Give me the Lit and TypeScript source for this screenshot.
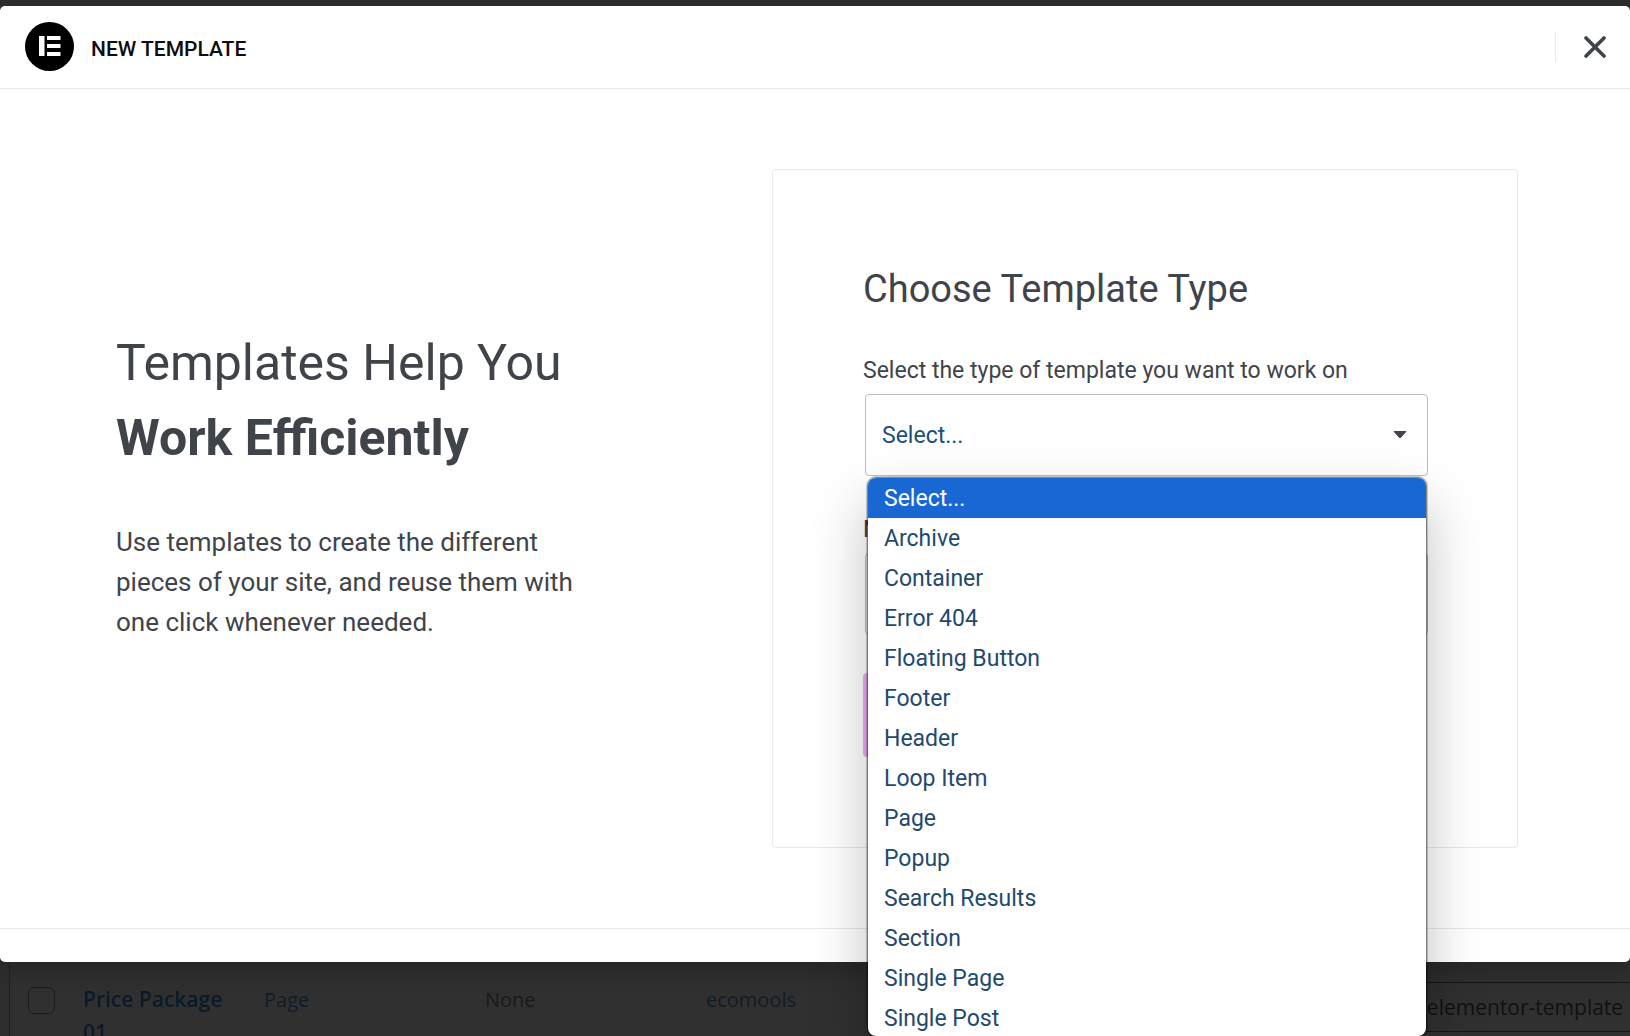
import { LitElement, html, css, svg } from "lit";
import { customElement, state } from "lit/decorators.js";

const TYPES = [
  "Select...",
  "Archive",
  "Container",
  "Error 404",
  "Floating Button",
  "Footer",
  "Header",
  "Loop Item",
  "Page",
  "Popup",
  "Search Results",
  "Section",
  "Single Page",
  "Single Post",
];

const logo = svg`
  <circle cx="24.5" cy="24.5" r="24.5" fill="#000"></circle>
  <path d="M14 14h5.5v20H14zM22 14h13.5v4H22zM22 22h13.5v4H22zM22 30h13.5v4H22z" fill="#fff"></path>`;

/** Drop-down with its own list of template types. */
@customElement("type-select")
class TypeSelect extends LitElement {
  @state() private open = true;
  @state() private value = TYPES[0];

  static styles = css`
    :host {
      display: block;
      position: relative;
    }
    .select {
      display: block;
      box-sizing: border-box;
      width: 100%;
      height: 82px;
      padding: 2px 16px 0;
      border: 1px solid #babfc5;
      border-radius: 4px;
      background: #fff;
      appearance: none;
      outline: none;
      color: #1f4f75;
      font: 400 23px/32px Roboto, sans-serif;
    }
    .arrow {
      position: absolute;
      top: 37px;
      right: 21px;
      pointer-events: none;
    }
    .list {
      position: absolute;
      z-index: 2;
      top: 84px;
      left: 3px;
      right: 2px;
      box-sizing: border-box;
      max-height: 558px;
      margin: 0;
      padding: 0;
      overflow: hidden;
      list-style: none;
      background: #fff;
      border-radius: 8px;
      box-shadow:
        0 0 0 1px rgba(0, 0, 0, 0.3),
        0 0 0 2px rgba(0, 0, 0, 0.2),
        0 26px 56px rgba(0, 0, 0, 0.26);
    }
    .option {
      display: block;
      box-sizing: border-box;
      width: 100%;
      height: 40px;
      padding: 2px 16px 0;
      border: 0;
      background: none;
      text-align: left;
      color: #1f4a6e;
      font: 400 23px/38px Roboto, sans-serif;
    }
    .option.current {
      background: #1967d2;
      color: #fff;
    }
  `;

  private pick(v: string) {
    this.value = v;
    this.open = false;
  }

  private toggle(e: Event) {
    e.preventDefault();
    this.open = !this.open;
  }

  render() {
    return html`
      <select
        class="select"
        aria-label="Select the type of template you want to work on"
        .value=${this.value}
        @mousedown=${this.toggle}
      >
        ${TYPES.map((t) => html`<option ?selected=${t === this.value}>${t}</option>`)}
      </select>
      <svg class="arrow" width="14" height="8" viewBox="0 0 14 8" aria-hidden="true">
        <path d="M1 0.5h12L7 7z" fill="#3f444b" stroke="#3f444b" stroke-linejoin="round"></path>
      </svg>
      ${this.open
        ? html`<ul class="list">
            ${TYPES.map(
              (t) => html`<li>
                <button
                  type="button"
                  class="option ${t === this.value ? "current" : ""}"
                  @click=${() => this.pick(t)}
                >${t}</button>
              </li>`
            )}
          </ul>`
        : null}
    `;
  }
}

@customElement("app-root")
class AppRoot extends LitElement {
  static styles = css`
    :host {
      display: block;
      box-sizing: border-box;
      height: 100vh;
      padding-top: 6px;
      overflow: hidden;
      background: #2e2e2e;
      color: #3f444b;
      font-family: Roboto, sans-serif;
    }
    .modal {
      position: relative;
      z-index: 1;
      border-radius: 5px;
      background: #fff;
      box-shadow: 2px 8px 23px 3px rgba(0, 0, 0, 0.2);
    }
    .header {
      display: flex;
      align-items: center;
      box-sizing: border-box;
      height: 83px;
      padding: 0 24px 1px 25px;
      border-bottom: 1px solid #e6e8ea;
    }
    .title {
      flex: 1;
      margin: 4px 0 0 17px;
      color: #0c0d0e;
      font-size: 21px;
      font-weight: 500;
      line-height: 28px;
    }
    .close {
      display: flex;
      align-items: center;
      height: 30px;
      padding: 0 0 0 28px;
      border: 0;
      border-left: 1px solid #e6e8ea;
      background: none;
    }
    .main {
      display: grid;
      grid-template-columns: 656fr 746fr;
      align-items: center;
      padding: 80px 112px 80px 116px;
    }
    .intro {
      max-width: 500px;
      padding-bottom: 50px;
    }
    .headline {
      margin: 0 0 46px;
      font-size: 50px;
      font-weight: 400;
      line-height: 75px;
    }
    .strong {
      display: block;
      font-weight: 700;
    }
    .text {
      margin: 0;
      font-size: 26px;
      line-height: 40px;
    }
    .card {
      display: flex;
      flex-direction: column;
      padding: 95px 89px 90px 90px;
      border: 1px solid #e6e8ea;
      border-radius: 4px;
    }
    .card-title {
      margin: 0 0 42px;
      font-size: 38px;
      font-weight: 400;
      line-height: 48px;
    }
    .label {
      margin-bottom: 7px;
      font-size: 23px;
      line-height: 32px;
    }
    .field {
      margin: 0 0 38px 2px;
    }
    .input {
      box-sizing: border-box;
      height: 82px;
      padding: 0 16px;
      border: 1px solid #babfc5;
      border-radius: 4px;
      font: 400 23px/32px Roboto, sans-serif;
    }
    .create {
      height: 84px;
      margin-right: 8px;
      border: 0;
      border-radius: 4px;
      background: #f0abfc;
      color: #0c0d0e;
      font: 500 23px/32px Roboto, sans-serif;
    }
    .footer {
      height: 33px;
      border-top: 1px solid #e6e8ea;
    }
    .table {
      width: calc(100% - 9px);
      margin-left: 9px;
      border-spacing: 0;
      border-left: 1px solid #222;
      background: #303030;
      table-layout: fixed;
      font: 400 21px/33px "Open Sans", sans-serif;
    }
    .cell {
      padding: 21px 0 0;
      text-align: left;
      vertical-align: top;
      font-weight: 400;
      color: #181a1c;
    }
    .check-cell {
      width: 73px;
    }
    .name-cell {
      width: 181px;
    }
    .type-cell {
      width: 221px;
    }
    .code-cell {
      width: 230px;
      padding: 20px 0 0;
    }
    .check {
      display: block;
      box-sizing: border-box;
      width: 27px;
      height: 27px;
      margin: 4px 0 0 18px;
      appearance: none;
      border: 1px solid #1c1c1c;
      border-radius: 6px;
    }
    .name {
      display: block;
      max-width: 160px;
      color: #0a1a28;
      text-decoration: none;
      font-size: 21px;
      font-weight: 600;
    }
    .link {
      color: #101c28;
      text-decoration: none;
      font-size: 20px;
    }
    .plain {
      font-size: 20px;
    }
    .code {
      display: block;
      box-sizing: border-box;
      width: 100%;
      height: 50px;
      padding: 0 0 0 20px;
      border: 1px solid #161616;
      border-width: 1px 0;
      background: none;
      color: #101112;
      font: 400 21px/32px "Open Sans", sans-serif;
    }
  `;

  render() {
    return html`
      <section class="modal" role="dialog" aria-label="New Template">
        <header class="header">
          <svg width="49" height="49" viewBox="0 0 49 49" aria-hidden="true">${logo}</svg>
          <h1 class="title">NEW TEMPLATE</h1>
          <button class="close" type="button" aria-label="Close">
            <svg width="22" height="22" viewBox="0 0 22 22" aria-hidden="true">
              <path d="M2 2l18 18M20 2L2 20" stroke="#3f444b" stroke-width="3.6" stroke-linecap="round"></path>
            </svg>
          </button>
        </header>
        <main class="main">
          <div class="intro">
            <h2 class="headline">Templates Help You <span class="strong">Work Efficiently</span></h2>
            <p class="text">
              Use templates to create the different pieces of your site, and reuse them with one
              click whenever needed.
            </p>
          </div>
          <form class="card">
            <h2 class="card-title">Choose Template Type</h2>
            <label class="label" for="type">Select the type of template you want to work on</label>
            <type-select class="field" id="type"></type-select>
            <label class="label" for="name">Name your template</label>
            <input class="field input" id="name" type="text" />
            <button class="create" type="button">Create Template</button>
          </form>
        </main>
        <footer class="footer"></footer>
      </section>
      <table class="table">
        <tbody>
          <tr>
            <td class="cell check-cell">
              <input class="check" type="checkbox" aria-label="Select Price Package 01" />
            </td>
            <th class="cell name-cell" scope="row"><a class="name" href="#">Price Package 01</a></th>
            <td class="cell type-cell"><a class="link" href="#">Page</a></td>
            <td class="cell type-cell plain">None</td>
            <td class="cell"><a class="link" href="#">ecomools</a></td>
            <td class="cell code-cell">
              <input class="code" type="text" readonly aria-label="Shortcode" value="[elementor-template" />
            </td>
          </tr>
        </tbody>
      </table>
    `;
  }
}
